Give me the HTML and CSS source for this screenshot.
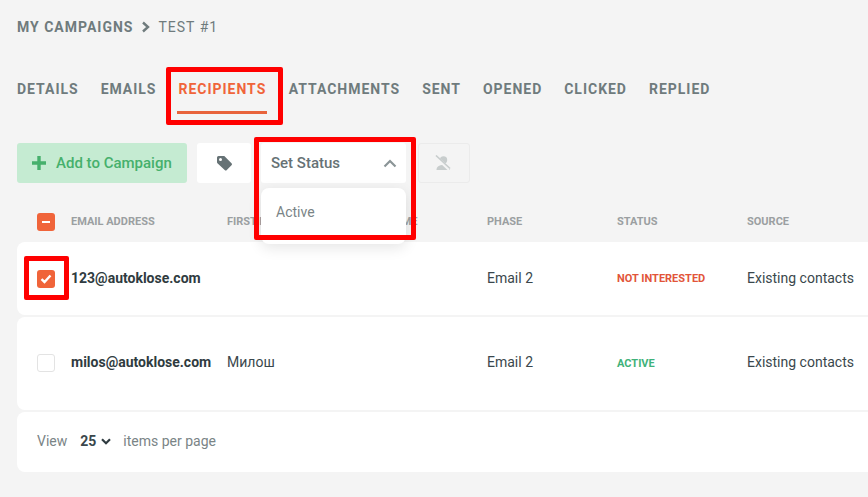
FILE: index.html
```html
<!DOCTYPE html>
<html lang="en">
<head>
<meta charset="utf-8">
<title>Test #1 recipients</title>
<link rel="stylesheet" href="styles.css">
</head>
<body>
<div class="page">
  <nav class="crumbs">
    <span class="crumb-root">MY CAMPAIGNS</span>
    <svg class="crumb-sep" width="10" height="12" viewBox="0 0 10 12"><path d="M2 1.500 7 6l-5 4.500" fill="none" stroke="#6f7b7d" stroke-width="2.400"/></svg>
    <span class="crumb-leaf">TEST #1</span>
  </nav>
  <div class="tabs">
    <span class="tab">DETAILS</span>
    <span class="tab">EMAILS</span>
    <span class="tab tab-active">RECIPIENTS</span>
    <span class="tab">ATTACHMENTS</span>
    <span class="tab">SENT</span>
    <span class="tab">OPENED</span>
    <span class="tab">CLICKED</span>
    <span class="tab">REPLIED</span>
  </div>
  <div class="toolbar">
    <button class="btn-add">
      <svg width="14" height="14" viewBox="0 0 14 14"><path d="M7 0v14M0 7h14" stroke="#46b06c" stroke-width="3.400"/></svg>
      <span>Add to Campaign</span>
    </button>
    <button class="btn-icon">
      <svg width="15" height="15" viewBox="0 0 15 15"><path d="M0 1.500A1.500 1.500 0 0 1 1.500 0h5.200c.4 0 .8.160 1.100.440l6.700 6.700a1.500 1.500 0 0 1 0 2.100l-4.700 4.700a1.500 1.500 0 0 1-2.100 0L.44 7.200A1.500 1.500 0 0 1 0 6.100zM3.500 5a1.500 1.500 0 1 0 0-3 1.500 1.500 0 0 0 0 3z" fill="#667275" fill-rule="evenodd"/></svg>
    </button>
    <div class="status-select">
      <span>Set Status</span>
      <svg width="14" height="9" viewBox="0 0 14 9"><path d="M1.500 7.500 7 2l5.500 5.500" fill="none" stroke="#8b9597" stroke-width="2.200"/></svg>
      <div class="status-menu">Active</div>
    </div>
    <button class="btn-disabled">
      <svg width="16" height="16" viewBox="0 0 16 16"><circle cx="8.500" cy="5" r="3.700" fill="#c8cdcd"/><path d="M1.500 15c0-3.500 2.500-5 7-5s6.500 1.500 6.500 5z" fill="#c8cdcd"/><path d="M.5 1.500 14.500 14.500" stroke="#f4f4f4" stroke-width="3.400"/><path d="M1 .5 15 13.500" stroke="#c8cdcd" stroke-width="1.600"/></svg>
    </button>
  </div>
  <div class="table-head grid">
    <span class="check check-on"><svg width="8" height="2" viewBox="0 0 8 2"><path d="M0 0h8v2H0z" fill="#fff"/></svg></span>
    <span class="cell">EMAIL ADDRESS</span>
    <span class="cell">FIRST NAME</span>
    <span class="cell">LAST NAME</span>
    <span class="cell">PHASE</span>
    <span class="cell">STATUS</span>
    <span class="cell">SOURCE</span>
  </div>
  <div class="row row-one grid">
    <span class="check check-on"><svg width="12" height="10" viewBox="0 0 12 10"><path d="M1.500 5.200 4.500 8l6-6.500" fill="none" stroke="#fff" stroke-width="2.400"/></svg></span>
    <span class="cell email">123@autoklose.com</span>
    <span></span>
    <span></span>
    <span class="cell">Email 2</span>
    <span class="badge badge-red">NOT INTERESTED</span>
    <span class="cell">Existing contacts</span>
  </div>
  <div class="row row-two grid">
    <span class="check"></span>
    <span class="cell email">milos@autoklose.com</span>
    <span class="cell">Милош</span>
    <span></span>
    <span class="cell">Email 2</span>
    <span class="badge badge-green">ACTIVE</span>
    <span class="cell">Existing contacts</span>
  </div>
  <div class="pager">
    <span>View</span>
    <span class="page-size">25
      <svg width="10" height="7" viewBox="0 0 10 7"><path d="M1 1.300 5 5.300l4-4" fill="none" stroke="#2f3b40" stroke-width="2.200"/></svg>
    </span>
    <span>items per page</span>
  </div>
  <div class="mark mark-tab"></div>
  <div class="mark mark-status"></div>
  <div class="mark mark-check"></div>
</div>
</body>
</html>
```
FILE: styles.css
```css
* { box-sizing: border-box; }
html, body { margin: 0; height: 100%; }
body {
  background: #f4f4f4;
  font-family: Roboto, "Noto Sans", sans-serif;
  overflow: hidden;
}
.page {
  position: relative;
  width: 868px;
  height: 497px;
  padding-left: 17px;
  overflow: hidden;
}
.crumbs {
  display: flex;
  align-items: center;
  height: 16px;
  margin-top: 19px;
  font-size: 14px;
  letter-spacing: 1px;
  color: #6f7b7d;
}
.crumb-root { font-weight: 700; }
.crumb-sep { margin: 0 7px 0 8px; }
.tabs {
  display: flex;
  gap: 22px;
  margin-top: 31px;
  height: 48px;
}
.tab {
  height: 48px;
  padding-top: 15px;
  font-size: 14px;
  line-height: 16px;
  font-weight: 700;
  letter-spacing: 0.98px;
  color: #6f7b7d;
}
.tab-active {
  margin-right: -0.5px;
  padding-left: 1px;
  padding-right: 1px;
  margin-left: -1px;
  color: #f0643a;
  border-bottom: 3px solid #e8643c;
}
.toolbar {
  display: flex;
  height: 40px;
  margin-top: 29px;
}
button {
  font-family: inherit;
  border: 0;
  padding: 0;
}
.btn-add {
  display: flex;
  align-items: center;
  gap: 10px;
  width: 170px;
  height: 40px;
  padding-left: 15px;
  border-radius: 3px;
  background: #c5ebd2;
  color: #46b06c;
  font-size: 15px;
  font-weight: 500;
}
.btn-icon {
  display: flex;
  align-items: center;
  justify-content: center;
  width: 54px;
  height: 40px;
  margin-left: 10px;
  border-radius: 3px;
  background: #fff;
}
.status-select {
  position: relative;
  display: flex;
  align-items: center;
  justify-content: space-between;
  width: 145px;
  height: 40px;
  margin-left: 10px;
  padding: 0 9px 0 10px;
  border-radius: 3px;
  background: #fff;
  color: #667275;
  font-size: 15px;
  font-weight: 500;
}
.status-menu {
  position: absolute;
  left: 0;
  top: 45px;
  z-index: 2;
  width: 145px;
  height: 56px;
  padding: 16px 15px;
  border-radius: 8px;
  background: #fff;
  box-shadow: 0 4px 14px rgba(0, 0, 0, 0.1);
  color: #7a8486;
  font-size: 14px;
  line-height: 17px;
  font-weight: 400;
}
.btn-disabled {
  display: flex;
  align-items: center;
  justify-content: center;
  width: 52px;
  height: 40px;
  margin-left: 12px;
  padding-right: 2px;
  border: 1px solid #ebebeb;
  border-radius: 3px;
  background: #f4f4f4;
}
.grid {
  display: grid;
  grid-template-columns: 34px 156px 130px 130px 130px 130px 150px;
  align-items: center;
  width: 880px;
  padding-left: 20px;
}
.table-head {
  height: 59px;
  padding-top: 19px;
  color: #9b9fa1;
  font-size: 11px;
  font-weight: 700;
}
.row {
  margin-bottom: 2px;
  border-radius: 8px 0 0 8px;
  background: #fff;
  color: #3a474c;
  font-size: 14px;
}
.row-one { height: 73px; }
.row-two { height: 93px; padding-bottom: 2px; }
.cell { margin-bottom: 2px; }
.check {
  display: flex;
  align-items: center;
  justify-content: center;
  width: 18px;
  height: 18px;
  border: 1px solid #e3e3e3;
  border-radius: 3px;
  background: #fff;
}
.check-on {
  border: 0;
  background: #f0643a;
}
.email {
  color: #2f3b40;
  font-weight: 700;
}
.badge {
  font-size: 11px;
  font-weight: 700;
}
.badge-red { color: #e2553a; }
.badge-green { color: #3fb27a; margin-top: 2px; }
.pager {
  display: flex;
  align-items: center;
  width: 880px;
  height: 60px;
  padding-left: 20px;
  padding-bottom: 2px;
  border-radius: 8px 0 0 8px;
  background: #fff;
  color: #7a8486;
  font-size: 14px;
}
.page-size {
  display: flex;
  align-items: center;
  gap: 5px;
  margin: 0 12px 0 13px;
  color: #3a474c;
  font-weight: 700;
}
.mark {
  position: absolute;
  z-index: 3;
  border: 5px solid #f00;
  border-radius: 2px;
}
.mark-tab { left: 166px; top: 67px; width: 117px; height: 58px; }
.mark-status { left: 254px; top: 137px; width: 162px; height: 103px; }
.mark-check { left: 24px; top: 256px; width: 45px; height: 44px; }
```
